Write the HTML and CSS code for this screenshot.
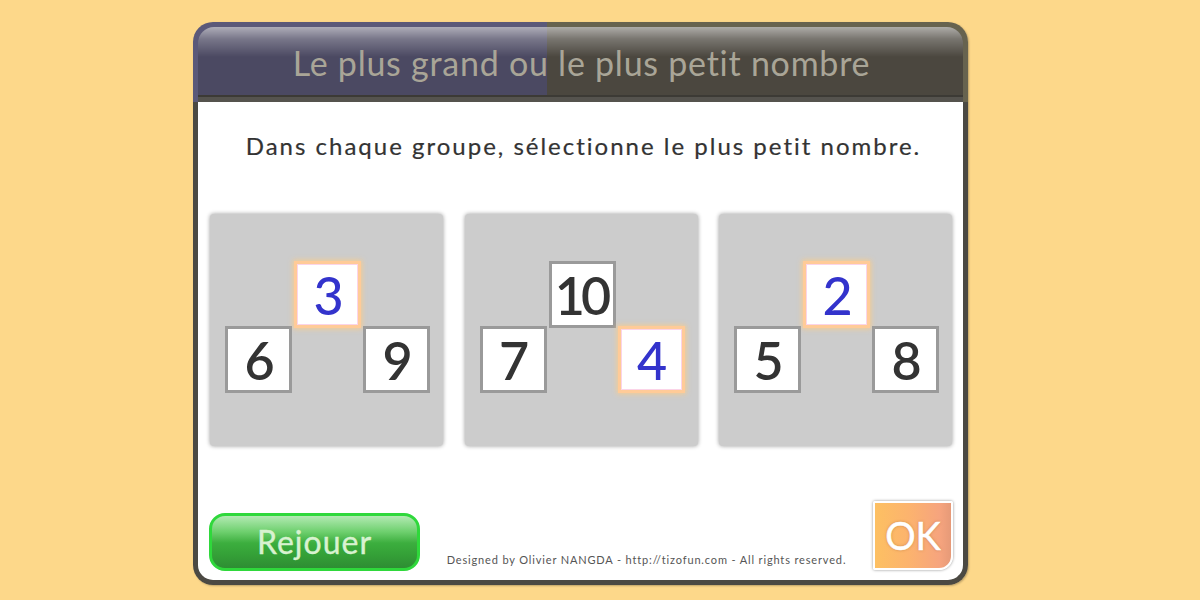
FILE: index.html
```html
<!DOCTYPE html>
<html lang="fr">
<head>
<meta charset="utf-8">
<title>Le plus grand ou le plus petit nombre</title>
<link rel="stylesheet" href="styles.css">
</head>
<body>
<div class="window">
  <header class="header">
    <div class="header-inner">
      <h1 class="title">Le plus grand ou le plus petit nombre</h1>
    </div>
  </header>
  <main class="content">
    <p class="instruction">Dans chaque groupe, sélectionne le plus petit nombre.</p>
    <div class="groups">
      <div class="group">
        <div class="tile pos-top selected">3</div>
        <div class="tile pos-left">6</div>
        <div class="tile pos-right">9</div>
      </div>
      <div class="group">
        <div class="tile pos-top">10</div>
        <div class="tile pos-left">7</div>
        <div class="tile pos-right selected">4</div>
      </div>
      <div class="group">
        <div class="tile pos-top selected">2</div>
        <div class="tile pos-left">5</div>
        <div class="tile pos-right">8</div>
      </div>
    </div>
    <footer class="footer">
      <button class="btn-replay">Rejouer</button>
      <div class="credits">Designed by Olivier NANGDA - http://tizofun.com - All rights reserved.</div>
      <button class="btn-ok">OK</button>
    </footer>
  </main>
</div>
</body>
</html>
```

FILE: styles.css
```css
html, body {
  margin: 0;
  padding: 0;
}
body {
  background: #fdd88a;
  font-family: "Lato", "Open Sans", sans-serif;
  width: 1200px;
  height: 600px;
  overflow: hidden;
}
.window {
  margin: 22px 0 0 193px;
  width: 775px;
  height: 563px;
  display: flex;
  flex-direction: column;
  border-radius: 20px;
  box-shadow: 1px 1px 2px rgba(0,0,0,0.25);
}
.header {
  height: 80px;
  box-sizing: border-box;
  padding: 5px 5px 0;
  border-radius: 20px 20px 0 0;
  background: linear-gradient(to right, #5b5979 0, #5b5979 354px, #67634f 354px, #67634f 100%);
  display: flex;
  flex-direction: column;
}
.header-inner {
  flex: 1;
  border-radius: 16px 16px 0 0;
  background:
    linear-gradient(to bottom, rgba(255,255,255,0.55) 0, rgba(255,255,255,0.25) 12px, rgba(255,255,255,0) 30px),
    linear-gradient(to right, #4b4962 0, #4b4962 349px, #4b473f 349px, #4b473f 100%);
  display: flex;
  align-items: center;
  justify-content: center;
  border-bottom: 5px solid #55534e;
  box-shadow: inset 0 -2px 0 #3c3a35;
}
.title {
  margin: 0 0 -1px 2px;
  font-weight: 400;
  font-size: 34px;
  letter-spacing: 0.75px;
  color: #a9a597;
}
.content {
  flex: 1;
  background: #fff;
  border: 5px solid #4b4943;
  border-top: none;
  border-radius: 0 0 20px 20px;
  display: flex;
  flex-direction: column;
}
.instruction {
  margin: 29px 0 0;
  padding-left: 6px;
  text-align: center;
  font-size: 24px;
  line-height: 30px;
  color: #333;
  letter-spacing: 2px;
  -webkit-text-stroke: 0.2px #333;
}
.groups {
  margin-top: 53px;
  padding: 0 11px 0 12px;
  display: flex;
  justify-content: space-between;
}
.group {
  width: 233px;
  height: 232px;
  box-sizing: border-box;
  background: #cccccc;
  border-radius: 4px;
  box-shadow: 0 0 4px rgba(0,0,0,0.4);
  padding: 47px 0 0 15px;
  display: grid;
  grid-template-columns: 67px 67px 67px;
  grid-template-rows: 65px 67px;
  column-gap: 2px;
  align-content: start;
}
.tile {
  width: 67px;
  height: 67px;
  box-sizing: border-box;
  background: #fff;
  border: 3px solid #9a9a9a;
  display: flex;
  align-items: center;
  justify-content: center;
  font-size: 52px;
  font-weight: 600;
  color: #333;
  line-height: 1;
  letter-spacing: -4px;
  padding-right: 2px;
}
.tile.selected {
  border-color: #ffcb98;
  color: #3333cc;
  font-weight: 500;
  box-shadow: 0 0 5px 1px rgba(255,205,130,0.8), inset 0 0 0 1px #fbd4e8;
}
.pos-top { grid-column: 2; grid-row: 1; }
.pos-left { grid-column: 1; grid-row: 2; }
.pos-right { grid-column: 3; grid-row: 2; }
.footer {
  margin-top: auto;
  padding: 0 10px 9px 11px;
  display: flex;
  align-items: flex-end;
}
.btn-replay {
  width: 211px;
  height: 58px;
  box-sizing: border-box;
  border: 3px solid #2fd83b;
  border-radius: 16px;
  background: linear-gradient(to bottom, #b3eab3 0, #6fd06f 30%, #3cae3e 52%, #34a037 75%, #2e8d33 100%);
  font-family: "Lato", sans-serif;
  font-size: 32px;
  color: #d8f2d0;
  letter-spacing: 1px;
  -webkit-text-stroke: 0.4px #d8f2d0;
  padding: 0 0 2px;
  cursor: pointer;
}
.credits {
  flex: 1;
  text-align: center;
  font-size: 11px;
  color: #555;
  letter-spacing: 0.85px;
  margin-bottom: 5px;
}
.btn-ok {
  width: 80px;
  height: 69px;
  margin-bottom: 1px;
  box-sizing: border-box;
  border: 2px solid #fff;
  border-radius: 2px 2px 14px 2px;
  background: linear-gradient(to right, #fdc062 0, #fcb36e 45%, #f6a47e 85%, #e69a78 100%);
  box-shadow: 0 0 3px rgba(0,0,0,0.45);
  font-family: "Lato", sans-serif;
  font-size: 38px;
  color: #fff;
  -webkit-text-stroke: 0.5px #fff;
  text-shadow: 0 0 3px rgba(150,80,30,0.5);
  padding: 0 0 2px;
  cursor: pointer;
}
```
